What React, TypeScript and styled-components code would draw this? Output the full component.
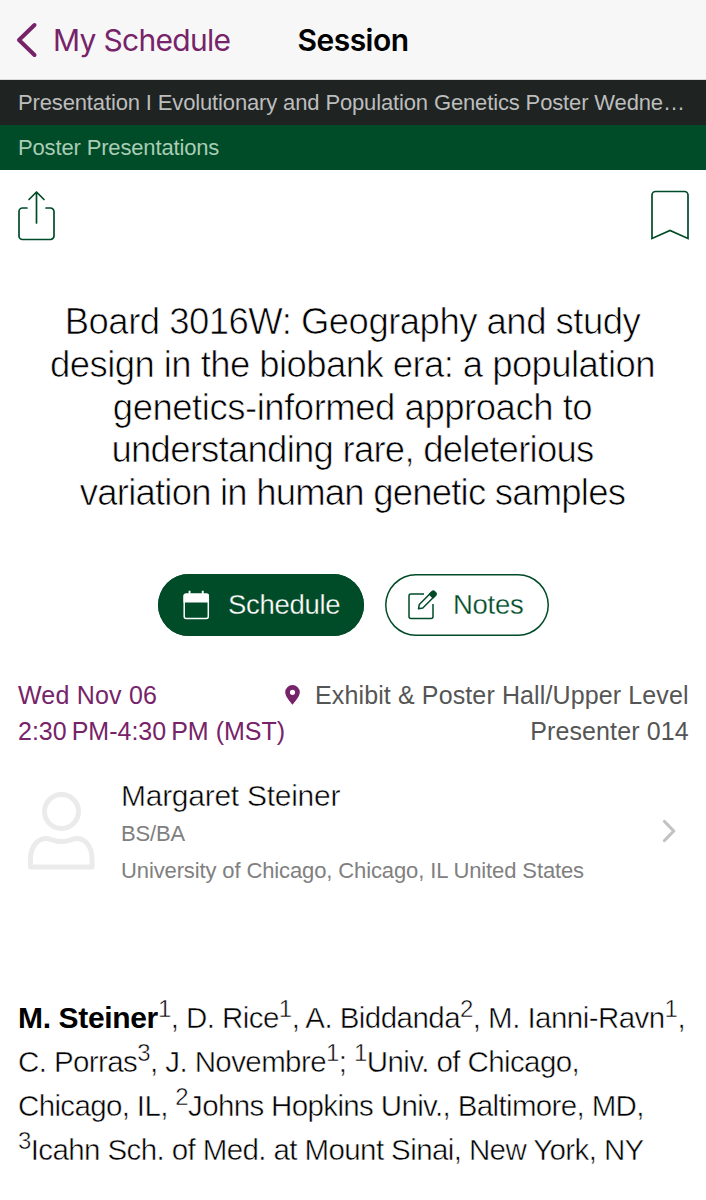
import React from 'react';
import styled, { createGlobalStyle } from 'styled-components';

const GREEN = '#004b28';
const PURPLE = '#762369';

const GlobalStyle = createGlobalStyle`
  body { margin: 0; background: #fff; }
  * { box-sizing: border-box; }
  p, h1, h2 { margin: 0; font-weight: 400; }
  button { font: inherit; background: none; border: 0; padding: 0; }
  svg { flex: none; display: block; }
`;

const Screen = styled.main`
  width: 706px;
  height: 1200px;
  overflow: hidden;
  display: flex;
  flex-direction: column;
  background: #fff;
  color: #000;
  font-family: 'Liberation Sans', Arial, sans-serif;
`;

const Line = styled.span<{ $track?: number }>`
  display: block;
  width: max-content;
  white-space: nowrap;
  letter-spacing: ${(p) => p.$track ?? 0}px;
`;

const NavBar = styled.header`
  height: 80px;
  flex: none;
  display: grid;
  grid-template-columns: 231px 244px 231px;
  align-items: center;
  background: #f7f7f7;
  border-bottom: 1px solid #d9d9d9;
  font-family: Inter, sans-serif;
  font-size: 30px;
`;

const BackButton = styled.button`
  display: flex;
  align-items: center;
  gap: 15px;
  padding-left: 16px;
  color: ${PURPLE};
`;

const NavTitle = styled.h1`
  justify-self: center;
  font-size: 30px;
  font-weight: 600;
`;

const Banner = styled.div<{ $bg: string; $fg: string }>`
  height: 45px;
  flex: none;
  display: flex;
  align-items: center;
  padding: 0 18px;
  background: ${(p) => p.$bg};
  color: ${(p) => p.$fg};
  font-size: 22px;
`;

const Actions = styled.div`
  height: 72px;
  flex: none;
  display: flex;
  justify-content: space-between;
  padding: 20px 16px 0 17px;
  color: ${GREEN};
`;

const Title = styled.h2`
  margin-top: 59px;
  padding-right: 1px;
  display: flex;
  flex-direction: column;
  align-items: center;
  font-size: 36.5px;
  line-height: 42.75px;
  -webkit-text-stroke: 0.7px #fff;
`;

const Buttons = styled.div`
  display: flex;
  gap: 21px;
  margin: 59px 0 0 158px;
`;

const Pill = styled.button<{ $filled?: boolean; $width: number }>`
  width: ${(p) => p.$width}px;
  height: 62px;
  display: flex;
  align-items: center;
  gap: ${(p) => (p.$filled ? 17 : 16)}px;
  padding: ${(p) => (p.$filled ? '1px 0 0 23px' : '1px 0 0 22px')};
  border-radius: 31px;
  box-shadow: inset 0 0 0 1.5px ${GREEN};
  background: ${(p) => (p.$filled ? GREEN : '#fff')};
  color: ${(p) => (p.$filled ? '#fff' : GREEN)};
  font-size: 27.5px;
  -webkit-text-stroke: 0.3px ${(p) => (p.$filled ? GREEN : '#fff')};

  svg {
    -webkit-text-stroke: 0;
  }
`;

const Meta = styled.section`
  display: flex;
  justify-content: space-between;
  margin-top: 41px;
  padding: 0 19px 0 18px;
  font-size: 25px;
  line-height: 36.5px;
`;

const When = styled.div`
  color: ${PURPLE};
`;

const Where = styled.div`
  display: flex;
  flex-direction: column;
  align-items: flex-end;
  color: #555;
`;

const Place = styled.div`
  display: flex;
  align-items: center;
  gap: 15px;
`;

const Person = styled.section`
  display: flex;
  align-items: center;
  height: 110px;
  margin-top: 26px;
  padding: 0 29px 0 26px;
`;

const PersonText = styled.div`
  flex: 1;
  margin-left: 25px;
  padding-top: 3px;
  color: #808080;
  font-size: 22px;
  line-height: 36.7px;
`;

const PersonName = styled.p`
  color: #000;
  font-size: 30px;
  line-height: 41px;
  -webkit-text-stroke: 0.5px #fff;
`;

const Authors = styled.p`
  margin-top: 110px;
  padding-left: 18px;
  font-size: 29.5px;
  line-height: 44px;
  -webkit-text-stroke: 0.5px #fff;

  sup {
    font-size: 24px;
    line-height: 0;
    vertical-align: 11px;
  }
`;

const LeadAuthor = styled.b`
  font-size: 30px;
  line-height: 0;
  letter-spacing: -0.35px;
  -webkit-text-stroke: 0;
`;

const BackIcon = () => (
  <svg width="22" height="36" viewBox="0 0 22 36" fill="none" stroke="currentColor" strokeWidth="4" strokeLinecap="round" strokeLinejoin="round">
    <path d="M18.500 3 3 18l15.500 15" />
  </svg>
);

const ShareIcon = () => (
  <svg width="40" height="52" viewBox="0 0 40 52" fill="none" stroke="currentColor" strokeWidth="1.7" strokeLinecap="round" strokeLinejoin="round">
    <path d="M10 18H5.500a3.500 3.500 0 0 0-3.500 3.500V46a3.500 3.500 0 0 0 3.500 3.500h28A3.500 3.500 0 0 0 37 46V21.500a3.500 3.500 0 0 0-3.500-3.500H29" />
    <path d="M19.500 33V2M12 9.500 19.500 2l7.500 7.500" />
  </svg>
);

const BookmarkIcon = () => (
  <svg width="40" height="52" viewBox="0 0 40 52" fill="none" stroke="currentColor" strokeWidth="1.7">
    <path d="M2 48.500V5a3.500 3.500 0 0 1 3.500-3.500h29A3.500 3.500 0 0 1 38 5v43.500L20 40.500Z" />
  </svg>
);

const CalendarIcon = () => (
  <svg width="30" height="30" viewBox="0 0 30 30">
    <path d="M2.500 12.500V5.500a2 2 0 0 1 2-2h3.100V.700h1.900v2.800h11.300V.700h1.900v2.800H26a2 2 0 0 1 2 2v7Z" fill="currentColor" />
    <rect x="3.200" y="4.200" width="24.100" height="24.300" rx="2" fill="none" stroke="currentColor" strokeWidth="1.500" />
  </svg>
);

const NoteIcon = () => (
  <svg width="30" height="30" viewBox="0 0 30 30" fill="none" stroke="currentColor" strokeWidth="1.500" strokeLinejoin="round">
    <path d="M17 4H4a2 2 0 0 0-2 2v20.500a2 2 0 0 0 2 2h20a2 2 0 0 0 2-2V14" />
    <path d="m11.500 18.800.8-4.300L24.500 2.300l3.500 3.500L15.800 18Z" />
    <path d="M22.500 4.300 25.200 1.600a1.500 1.500 0 0 1 2.200 0l1.300 1.300a1.500 1.500 0 0 1 0 2.200L26 7.800Z" fill="currentColor" />
  </svg>
);

const PinIcon = () => (
  <svg width="15" height="20" viewBox="0 0 15 20">
    <path fillRule="evenodd" fill={PURPLE} d="M7.500 0A7.300 7.300 0 0 0 .2 7.300C.2 11.500 5 16.500 7.500 19.800 10 16.500 14.800 11.500 14.800 7.300A7.300 7.300 0 0 0 7.500 0Zm0 4.700a2.600 2.600 0 1 1 0 5.200 2.600 2.600 0 0 1 0-5.200Z" />
  </svg>
);

const PersonIcon = () => (
  <svg width="70" height="80" viewBox="0 0 70 80" fill="none" stroke="#ebebeb" strokeWidth="5" strokeLinejoin="round">
    <circle cx="35.500" cy="20.500" r="17" />
    <path d="M4.500 76V68C4.500 54 13 47.500 20 47.500c5 0 8 3 15.500 3s10.500-3 15.500-3C58 47.500 66 54 66 68v8Z" />
  </svg>
);

const ChevronIcon = () => (
  <svg width="16" height="24" viewBox="0 0 16 24" fill="none" stroke="#c2c2c2" strokeWidth="3.200" strokeLinecap="round" strokeLinejoin="round">
    <path d="m3.500 2.500 9.300 9.500-9.300 9.500" />
  </svg>
);

export default function App() {
  return (
    <Screen>
      <GlobalStyle />
      <NavBar>
        <BackButton>
          <BackIcon />
          <Line $track={-0.7}>My Schedule</Line>
        </BackButton>
        <NavTitle><Line $track={-0.5}>Session</Line></NavTitle>
      </NavBar>
      <Banner $bg="#1f2322" $fg="#bcbdbd">
        <Line $track={-0.14}>Presentation I Evolutionary and Population Genetics Poster Wedne…</Line>
      </Banner>
      <Banner $bg={GREEN} $fg="#a9cdb4"><Line $track={-0.15}>Poster Presentations</Line></Banner>
      <Actions><ShareIcon /><BookmarkIcon /></Actions>
      <Title>
        <Line $track={-0.51}>Board 3016W: Geography and study</Line>
        <Line $track={-0.57}>design in the biobank era: a population</Line>
        <Line $track={-0.47}>genetics-informed approach to</Line>
        <Line $track={-0.75}>understanding rare, deleterious</Line>
        <Line $track={-0.79}>variation in human genetic samples</Line>
      </Title>
      <Buttons>
        <Pill $filled $width={206}><CalendarIcon /><Line $track={-0.3}>Schedule</Line></Pill>
        <Pill $width={164}><NoteIcon /><Line $track={-0.3}>Notes</Line></Pill>
      </Buttons>
      <Meta>
        <When>
          <Line $track={0.2}>Wed Nov 06</Line>
          <Line>2:30{'\u202f'}PM-4:30{'\u202f'}PM (MST)</Line>
        </When>
        <Where>
          <Place><PinIcon /><Line $track={0.12}>Exhibit &amp; Poster Hall/Upper Level</Line></Place>
          <Line $track={0.1}>Presenter 014</Line>
        </Where>
      </Meta>
      <Person>
        <PersonIcon />
        <PersonText>
          <PersonName><Line $track={-0.27}>Margaret Steiner</Line></PersonName>
          <Line $track={-0.15}>BS/BA</Line>
          <Line $track={-0.12}>University of Chicago, Chicago, IL United States</Line>
        </PersonText>
        <ChevronIcon />
      </Person>
      <Authors>
        <Line $track={-0.55}>
          <LeadAuthor>M. Steiner</LeadAuthor><sup>1</sup>, D. Rice<sup>1</sup>, A. Biddanda<sup>2</sup>, M. Ianni-Ravn<sup>1</sup>,
        </Line>
        <Line $track={-0.59}>C. Porras<sup>3</sup>, J. Novembre<sup>1</sup>; <sup>1</sup>Univ. of Chicago,</Line>
        <Line $track={-0.64}>Chicago, IL, <sup>2</sup>Johns Hopkins Univ., Baltimore, MD,</Line>
        <Line $track={-0.6}><sup>3</sup>Icahn Sch. of Med. at Mount Sinai, New York, NY</Line>
      </Authors>
    </Screen>
  );
}
